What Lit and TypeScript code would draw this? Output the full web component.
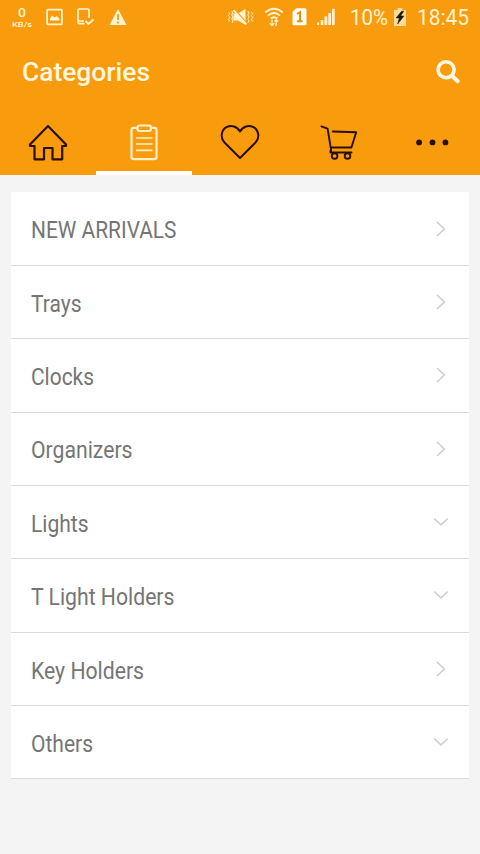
import { LitElement, html, svg, css } from "lit";
import { customElement, property } from "lit/decorators.js";

interface Category {
  label: string;
  width: number;
  expandable?: boolean;
}

const CATEGORIES: Category[] = [
  { label: "NEW ARRIVALS", width: 145.5 },
  { label: "Trays", width: 50.5 },
  { label: "Clocks", width: 63 },
  { label: "Organizers", width: 101.5 },
  { label: "Lights", width: 57.5, expandable: true },
  { label: "T Light Holders", width: 143.5, expandable: true },
  { label: "Key Holders", width: 113 },
  { label: "Others", width: 62, expandable: true },
];

@customElement("fit-text")
class FitText extends LitElement {
  @property() text = "";
  @property({ type: Number }) width = 50;
  @property({ type: Number }) size = 24;
  static styles = css`
    :host { display: block; flex: none; }
    svg { display: block; overflow: visible; }
    text { fill: currentColor; font-family: Roboto, "Liberation Sans", sans-serif; }
  `;
  render() {
    const h = Math.round(this.size * 1.25);
    return html`<svg width=${this.width} height=${h}>
      ${svg`<text x="0" y=${this.size} font-size=${this.size} textLength=${this.width} lengthAdjust="spacingAndGlyphs">${this.text}</text>`}
    </svg>`;
  }
}

@customElement("status-bar")
class StatusBar extends LitElement {
  static styles = css`
    :host { display: flex; align-items: center; height: 34px; padding: 0 11px 0 11px; color: #fff3d2; }
    svg { display: block; flex: none; }
    .speed { display: flex; flex-direction: column; align-items: center; width: 22px; margin-right: 13px; }
    .speed fit-text + fit-text { margin-top: -1px; font-weight: 500; }
    .speed fit-text:first-child { font-weight: 500; margin-top: -2px; }
    .image { margin-right: 14px; }
    .device { margin-right: 15px; }
    .mute { margin-left: auto; margin-right: 10px; }
    .wifi { margin-right: 8px; }
    .sim { margin-right: 9px; }
    .signal { margin-right: 14px; }
    .battery { margin: 0 10px 0 5px; }
    .big { margin-top: -1px; }
  `;
  render() {
    return html`
      <div class="speed">
        <fit-text text="0" width="8" size="13"></fit-text>
        <fit-text text="KB/s" width="20" size="8"></fit-text>
      </div>
      <svg class="image" width="17" height="18" viewBox="0 0 17 18">
        <rect x="1.1" y="1.6" width="14.8" height="14.8" rx="1" fill="none" stroke="currentColor" stroke-width="1.8" />
        <path d="M4 12.5V10l2.5-2.5 2 2 2.5-1.5 2.5 3v1.5z" fill="currentColor" />
      </svg>
      <svg class="device" width="17" height="18" viewBox="0 0 17 18">
        <path d="M12 10V2.2Q12 1 10.8 1H2.2Q1 1 1 2.2V14.5Q1 15.7 2.2 15.7H7.5M1 13H7" fill="none" stroke="currentColor" stroke-width="1.7" />
        <path d="M8.5 13l3 3 5-4.5" fill="none" stroke="currentColor" stroke-width="1.8" />
      </svg>
      <svg width="18" height="18" viewBox="0 0 18 18">
        <path d="M9 1L17.5 17H.5z" fill="currentColor" />
        <path d="M9 6v6M9 13.5v2" stroke="#f89c0e" stroke-width="1.8" />
      </svg>
      <svg class="mute" width="27" height="18" viewBox="0 0 27 18">
        <path d="M6.5 5.5h4.5L18.5 1v16L11 12.5H6.5z" fill="currentColor" />
        <path d="M8 2L20.5 16" stroke="#f89c0e" stroke-width="1.4" />
        <path d="M6.5 2L19.5 16.5" stroke="currentColor" stroke-width="1.7" />
        <path d="M1.5 4l1.4 1.5L1.5 7.5l1.4 2-1.4 2 1.4 2M4.8 3l1.2 2-1.2 2 1.2 2-1.2 2 1.2 2-1 2M20.8 3l1.3 2-1.3 2 1.3 2-1.3 2 1.3 2-1.3 2M24.3 4l1.4 1.5-1.4 2 1.4 2-1.4 2 1.4 2" fill="none" stroke="currentColor" />
      </svg>
      <svg class="wifi" width="20" height="20" viewBox="0 0 20 20">
        <path d="M1.3 5.4Q10-2 18.7 5.4M4 8.6Q10 3.5 16 8.6M6.6 11.5Q10 8.8 13.4 11.5" fill="none" stroke="currentColor" stroke-width="1.9" />
        <path d="M8 12.5v6M5.7 16.2L8 18.6l2.3-2.4M12.2 19v-6M10.5 14.6l1.7-1.8 2 1.8" fill="none" stroke="currentColor" stroke-width="1.3" />
      </svg>
      <svg class="sim" width="15" height="18" viewBox="0 0 15 18">
        <path d="M4 .3h9Q14.5.3 14.5 1.8v14Q14.5 17.3 13 17.3H2Q.5 17.3.5 15.8V4z" fill="#fffdf2" />
        <path d="M5 6l3-1.8V13M5 13.3h5.5" fill="none" stroke="#e58f0a" stroke-width="2" />
      </svg>
      <svg class="signal" width="20" height="18" viewBox="0 0 20 18">
        <path d="M1 14.5h2.2v2.5H1zM4.7 12h2.7v5H4.7zM8.5 8.5h2.8v8.5H8.5zM12.3 5h2.7v12h-2.7zM16 .8h2.7V17H16z" fill="currentColor" />
      </svg>
      <fit-text class="big" text="10%" width="38" size="22"></fit-text>
      <svg class="battery" width="14" height="20" viewBox="0 0 14 20">
        <path d="M4.5 1h5v2H13v16H1V3h3.5z" fill="#ffdc9c" />
        <path d="M8.6 4.2L3.1 11h3.2L4.6 17 11 9H7.7l3-4.8z" fill="#1e1408" stroke="#1e1408" stroke-width=".5" />
      </svg>
      <fit-text class="big" text="18:45" width="52" size="22"></fit-text>
    `;
  }
}

@customElement("app-root")
class AppRoot extends LitElement {
  static styles = css`
    :host { display: block; box-sizing: border-box; height: 854px; overflow: hidden; background: #f4f4f4; }
    svg { display: block; }
    header { display: flex; flex-direction: column; height: 175px; background: #f89c0e; }
    .title { display: flex; align-items: center; justify-content: space-between; height: 76px; padding: 0 19px 0 22px; color: #fff6df; }
    .title fit-text { font-weight: 500; margin-top: -2px; }
    .tabs { display: grid; grid-template-columns: repeat(5, 1fr); flex: 1; color: #2a1002; }
    .tab { display: flex; justify-content: center; box-sizing: border-box; padding-top: 14px; border-bottom: 4px solid transparent; }
    .cart { padding-left: 4px; }
    .active { color: #fff0c8; border-color: #fff; }
    ul { list-style: none; margin: 17.48px 11px 0; padding: 0; background: #fff; }
    li { display: flex; align-items: center; justify-content: space-between; box-sizing: border-box; height: 73.35px; padding: 0 19px 0 20px; border-bottom: 1px solid #dadada; color: #757575; }
    li fit-text { margin-top: 1.6px; }
    .arrow { fill: none; stroke: #cecece; stroke-width: 1.6; }
  `;

  render() {
    return html`
      <header>
        <status-bar></status-bar>
        <div class="title">
          <fit-text text="Categories" width="128" size="26"></fit-text>
          <svg width="26" height="26" viewBox="0 0 26 26" fill="none" stroke="#fff6df">
            <circle cx="11.1" cy="10.7" r="8" stroke-width="3.6" />
            <path d="M17 17l5.7 5.2" stroke-width="4.2" stroke-linecap="round" />
          </svg>
        </div>
        <nav class="tabs">
          <div class="tab">
            <svg width="40" height="38" viewBox="0 0 40 38" fill="none" stroke="currentColor" stroke-width="2.2" stroke-linejoin="round">
              <path d="M20 2L38 20.5V22H34.2V35.3H24.5V24H16V35.3H6.5V22H2V20.5z" />
            </svg>
          </div>
          <div class="tab active">
            <svg width="28" height="38" viewBox="0 0 28 38" fill="none" stroke="currentColor" stroke-width="2.2">
              <path d="M8 3.8H3.8Q1.5 3.8 1.5 6V33Q1.5 35.2 3.8 35.2H24.2Q26.5 35.2 26.5 33V6Q26.5 3.8 24.2 3.8H20" />
              <rect x="7.5" y="1.5" width="13.5" height="5.5" rx="2.2" />
              <path d="M6 14H22.5M6 20H22.5M6 26.3H22.5" stroke-width="1.7" />
            </svg>
          </div>
          <div class="tab">
            <svg width="40" height="38" viewBox="0 0 40 38" fill="none" stroke="currentColor" stroke-width="2" stroke-linejoin="round">
              <path d="M20 34L4.5 18.5C-.3 13.2 1.5 6 6.5 3.2C11.5.6 17 2.3 20 7.5C23 2.3 28.5.6 33.5 3.2C38.5 6 40.3 13.2 35.5 18.5z" />
            </svg>
          </div>
          <div class="tab cart">
            <svg width="40" height="38" viewBox="0 0 40 38" fill="none" stroke="currentColor" stroke-width="1.9" stroke-linejoin="round" stroke-linecap="round">
              <path d="M3.4 2.4L9.6 4.6L13.2 26.7M14.8 7.5L38.2 8.2L33.4 23.5H13M12.5 26.5V28.5H33.5" />
              <circle cx="16.6" cy="32" r="2.8" />
              <circle cx="29.5" cy="32" r="2.8" />
            </svg>
          </div>
          <div class="tab">
            <svg width="34" height="38" viewBox="0 0 34 38" fill="currentColor">
              <circle cx="4.1" cy="18.4" r="2.9" />
              <circle cx="17.5" cy="18.4" r="2.9" />
              <circle cx="30.4" cy="18.4" r="2.9" />
            </svg>
          </div>
        </nav>
      </header>
      <ul>
        ${CATEGORIES.map(
          (c) => html`<li>
            <fit-text text=${c.label} width=${c.width} size="24"></fit-text>
            <svg class="arrow" width="18" height="18" viewBox="0 0 18 18">
              ${c.expandable ? svg`<path d="M2.2 5.5L9 11.8L15.8 5.5" />` : svg`<path d="M5 2L12.3 9L5 16" />`}
            </svg>
          </li>`
        )}
      </ul>
    `;
  }
}
